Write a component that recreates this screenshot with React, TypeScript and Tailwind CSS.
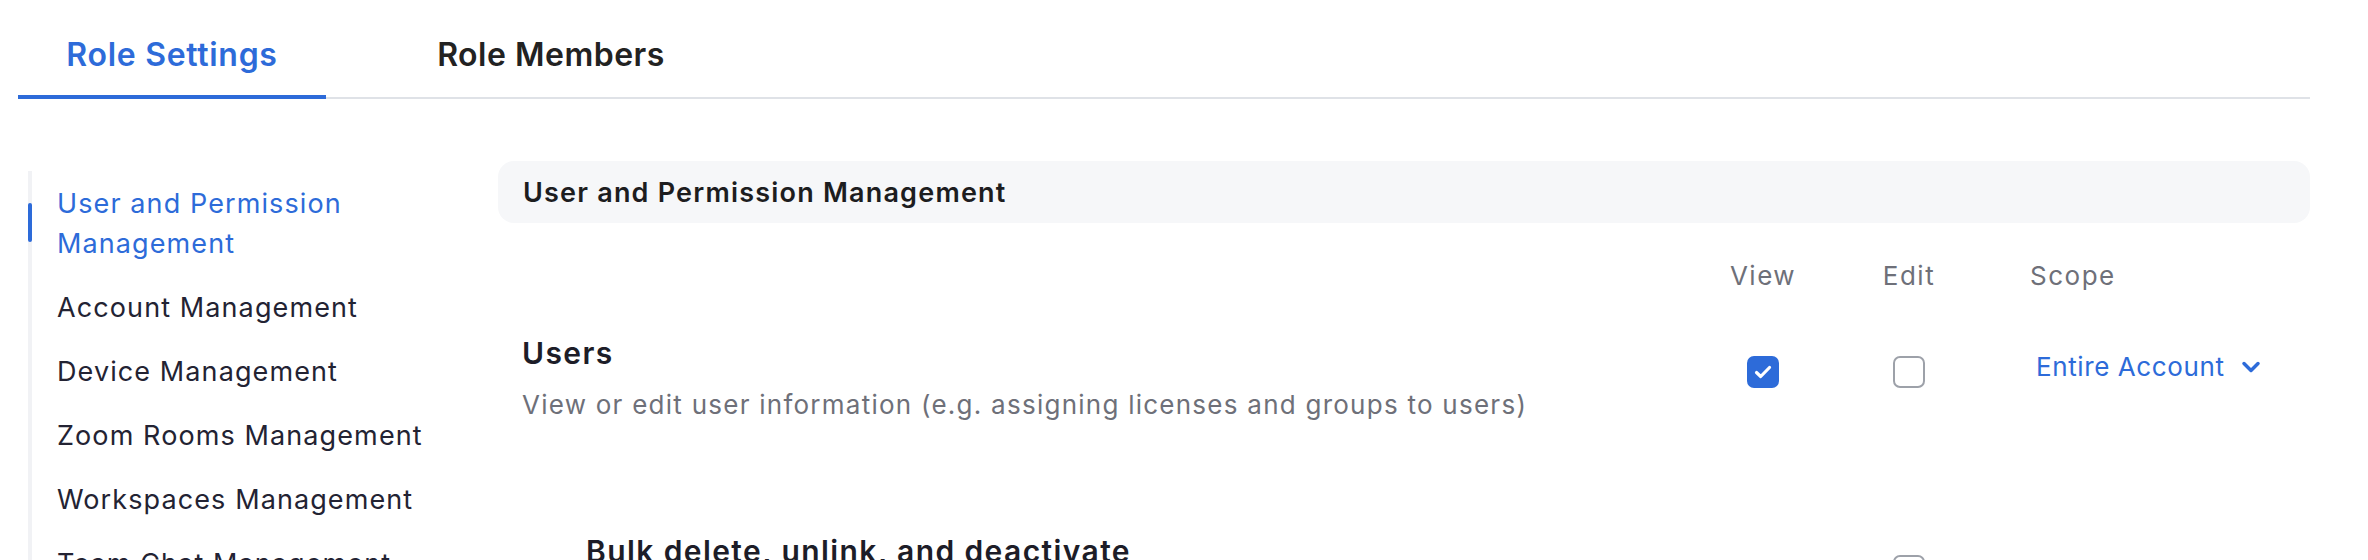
import { useState } from 'react'

// side menu entries
const NAV_ITEMS = [
  'User and Permission Management',
  'Account Management',
  'Device Management',
  'Zoom Rooms Management',
  'Workspaces Management',
  'Team Chat Management',
]

function CheckBox({ checked }: { checked: boolean }) {
  if (checked) {
    return (
      <span className="flex h-[32px] w-[32px] items-center justify-center rounded-[7px] bg-[#2d6bd9]">
        <svg width="18" height="14" viewBox="0 0 18 14" fill="none">
          <path d="M2.5 7.5l4.2 4L15.5 2.5" stroke="white" strokeWidth="3.2" strokeLinecap="round" strokeLinejoin="round" />
        </svg>
      </span>
    )
  }
  return <span className="block h-[32px] w-[32px] rounded-[7px] border-[2.5px] border-[#9da1a9] bg-white" />
}

function Chevron() {
  return (
    <svg width="20" height="12" viewBox="0 0 20 12" fill="none">
      <path d="M3 2.5l7 7 7-7" stroke="#2d6bd9" strokeWidth="3.5" strokeLinecap="round" strokeLinejoin="round" />
    </svg>
  )
}

export default function App() {
  const [tab, setTab] = useState(0)
  const [active] = useState(0)

  return (
    <div className="h-[560px] w-[2368px] overflow-hidden bg-white font-['Inter','Noto_Sans',sans-serif]">
      <div className="ml-[18px] w-[2292px]">
        {/* ===== tabs ===== */}
        <div className="flex border-b-2 border-[#dfe2e7]">
          <button
            onClick={() => setTab(0)}
            className={`-mb-[2px] flex h-[99px] w-[308px] items-center justify-center border-b-4 pt-[14px] text-[32px] font-semibold tracking-[0.7px] ${tab === 0 ? 'border-[#2d6bd9] text-[#2d6bd9]' : 'border-transparent text-[#222222]'}`}
          >
            Role Settings
          </button>
          <button
            onClick={() => setTab(1)}
            className={`-mb-[2px] ml-[62px] flex h-[99px] w-[326px] items-center justify-center border-b-4 pt-[14px] text-[32px] font-semibold tracking-[0.5px] ${tab === 1 ? 'border-[#2d6bd9] text-[#2d6bd9]' : 'border-transparent text-[#222222]'}`}
          >
            Role Members
          </button>
        </div>

        <div className="mt-[62px] flex">
          {/* ===== side nav ===== */}
          <div className="ml-[10px] mt-[10px] w-[470px] shrink-0">
            <ul className="flex flex-col gap-[24px] border-l-4 border-[#f1f2f5] pl-[25px] pt-[13px]">
              {NAV_ITEMS.map((item, i) => (
                <li
                  key={item}
                  className={`relative w-[400px] text-[27px] leading-[40px] tracking-[1.1px] ${i === active ? 'text-[#2d6bd9]' : 'text-[#232333]'}`}
                >
                  {i === active && (
                    <span className="absolute -left-[29px] top-[19px] h-[39px] w-[4px] rounded-full bg-[#2d6bd9]" />
                  )}
                  {item}
                </li>
              ))}
            </ul>
          </div>

          {/* ===== main panel ===== */}
          <div className="flex-1">
            <div className="flex h-[62px] items-center rounded-[16px] bg-[#f6f7f9] pl-[25px] pt-[2px] text-[27px] font-semibold tracking-[1.2px] text-[#1d1d1f]">
              User and Permission Management
            </div>

            <div className="mt-[37px] flex text-[26px] leading-[32px] tracking-[1.5px] text-[#6e7079]">
              <div className="flex-1" />
              <div className="w-[146px] text-center">View</div>
              <div className="w-[146px] text-center">Edit</div>
              <div className="w-[328px] pl-[48px]">Scope</div>
            </div>

            {/* Users row */}
            <div className="mt-[43px] flex">
              <div className="flex-1 pl-[24px]">
                <div className="text-[30px] font-semibold leading-[36px] tracking-[1.4px] text-[#1d1d28]">Users</div>
                <div className="mt-[18px] text-[26px] leading-[32px] tracking-[1.25px] text-[#6e7079]">
                  View or edit user information (e.g. assigning licenses and groups to users)
                </div>
              </div>
              <div className="flex w-[146px] justify-center pt-[21px]">
                <CheckBox checked />
              </div>
              <div className="flex w-[146px] justify-center pt-[21px]">
                <CheckBox checked={false} />
              </div>
              <div className="w-[328px] pl-[54px] pt-[16px]">
                <button className="flex items-center gap-[16px] text-[26px] leading-[32px] tracking-[0.6px] text-[#2d6bd9]">
                  Entire Account
                  <Chevron />
                </button>
              </div>
            </div>

            {/* Bulk row */}
            <div className="mt-[112px] flex">
              <div className="flex-1 pl-[88px]">
                <div className="text-[30px] font-semibold leading-[36px] tracking-[1.4px] text-[#1d1d28]">
                  Bulk delete, unlink, and deactivate
                </div>
              </div>
              <div className="w-[146px]" />
              <div className="flex w-[146px] justify-center pt-[22px]">
                <CheckBox checked={false} />
              </div>
              <div className="w-[328px]" />
            </div>
          </div>
        </div>
      </div>
    </div>
  )
}
